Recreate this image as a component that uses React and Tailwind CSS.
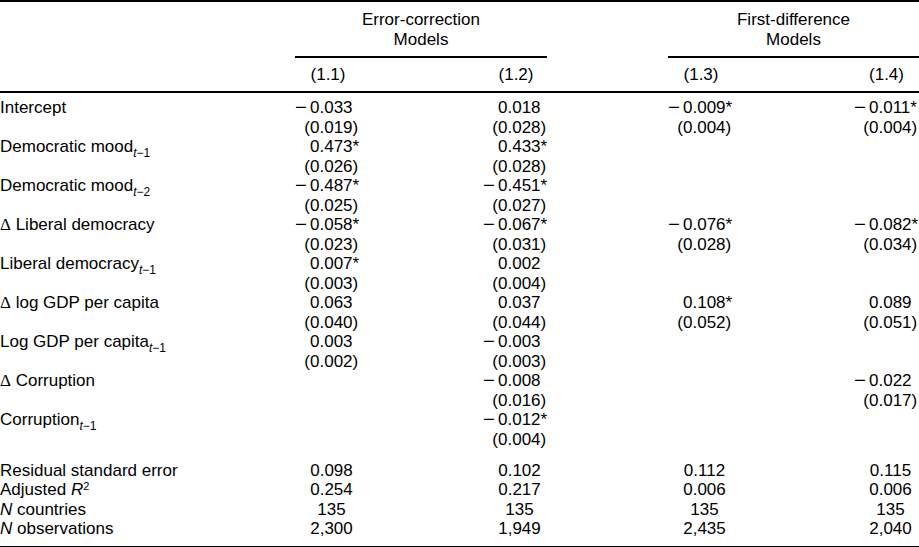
import React from 'react';

const GRID = 'grid grid-cols-[295px_66px_122px_66px_119px_66px_120px_65px]';

const Delta = () => <span className="font-['Liberation_Serif',serif]">Δ</span>;

// Variable rows: label, then [coef, se] per model (null = empty cell)
const ROWS = [
  { label: 'Intercept', cells: [['−0.033', '(0.019)'], ['0.018', '(0.028)'], ['−0.009*', '(0.004)'], ['−0.011*', '(0.004)']] },
  { label: 'Democratic mood', sub: '1', cells: [['0.473*', '(0.026)'], ['0.433*', '(0.028)'], null, null] },
  { label: 'Democratic mood', sub: '2', cells: [['−0.487*', '(0.025)'], ['−0.451*', '(0.027)'], null, null] },
  { label: <><Delta /> Liberal democracy</>, cells: [['−0.058*', '(0.023)'], ['−0.067*', '(0.031)'], ['−0.076*', '(0.028)'], ['−0.082*', '(0.034)']] },
  { label: 'Liberal democracy', sub: '1', cells: [['0.007*', '(0.003)'], ['0.002', '(0.004)'], null, null] },
  { label: <><Delta /> log GDP per capita</>, cells: [['0.063', '(0.040)'], ['0.037', '(0.044)'], ['0.108*', '(0.052)'], ['0.089', '(0.051)']] },
  { label: 'Log GDP per capita', sub: '1', cells: [['0.003', '(0.002)'], ['−0.003', '(0.003)'], null, null] },
  { label: <><Delta /> Corruption</>, cells: [null, ['−0.008', '(0.016)'], null, ['−0.022', '(0.017)']] },
  { label: 'Corruption', sub: '1', cells: [null, ['−0.012*', '(0.004)'], null, null] },
];

const STATS = [
  { label: <>Residual standard error</>, vals: ['0.098', '0.102', '0.112', '0.115'] },
  { label: <>Adjusted <i>R</i><sup className="text-[11px]">2</sup></>, vals: ['0.254', '0.217', '0.006', '0.006'] },
  { label: <><i>N</i> countries</>, vals: ['135', '135', '135', '135'] },
  { label: <><i>N</i> observations</>, vals: ['2,300', '1,949', '2,435', '2,040'] },
];

// column slots in the grid (spacer columns sit between them)
const SLOTS = ['col-start-2', 'col-start-4', 'col-start-6', 'col-start-8'];

const Num = ({ value }) => {
  if (!value) return null;
  const first = value[0];
  if (first === '−') {
    return (
      <span className="whitespace-nowrap">
        <span className="inline-block w-[15px]">
          <span className="inline-block origin-left scale-x-[1.2]">−</span>
        </span>
        {value.slice(1)}
      </span>
    );
  }
  if (first === '(') {
    return (
      <span className="whitespace-nowrap">
        <span className="inline-block w-[15px] text-right">(</span>
        {value.slice(1)}
      </span>
    );
  }
  return (
    <span className="whitespace-nowrap">
      <span className="inline-block w-[15px]" />
      {value}
    </span>
  );
};

const Label = ({ label, sub }) => (
  <span className="whitespace-nowrap">
    {label}
    {sub && (
      <sub className="text-[12px] bottom-[-0.4em]">
        <i>t</i>−{sub}
      </sub>
    )}
  </span>
);

const Line = ({ label, values }) => (
  <div className={`${GRID} h-[19.5px] leading-[19.5px]`}>
    <div className="col-start-1">{label}</div>
    {values.map((v, i) => (
      <div key={i} className={SLOTS[i]}>
        <Num value={v} />
      </div>
    ))}
  </div>
);

export default function App() {
  return (
    <div className="w-[919px] h-[547px] bg-white text-black text-[17px] leading-[19.5px] font-['Liberation_Sans',Arial,sans-serif] overflow-hidden">
      <div className="h-[2px] bg-black" />

      {/* Group headers */}
      <div className={`${GRID} pt-[8px]`}>
        <div className="col-start-2 col-span-3 pr-[2px] text-center">
          <div>Error-correction</div>
          <div>Models</div>
          <div className="mt-[7px] h-[1.5px] bg-black" />
        </div>
        <div className="col-start-6 col-span-3 text-center">
          <div>First-difference</div>
          <div>Models</div>
          <div className="mt-[7px] h-[1.5px] bg-black" />
        </div>
      </div>

      {/* Model numbers */}
      <div className={`${GRID} pt-[7px] pb-[7px]`}>
        {['(1.1)', '(1.2)', '(1.3)', '(1.4)'].map((h, i) => (
          <div key={h} className={`${SLOTS[i]} text-center whitespace-nowrap`}>{h}</div>
        ))}
      </div>
      <div className="h-[2px] bg-black" />

      {/* Coefficients */}
      <div className="pt-[5px]">
        {ROWS.map((r, idx) => (
          <React.Fragment key={idx}>
            <Line label={<Label label={r.label} sub={r.sub} />} values={r.cells.map((c) => (c ? c[0] : null))} />
            <Line label={null} values={r.cells.map((c) => (c ? c[1] : null))} />
          </React.Fragment>
        ))}
      </div>

      {/* Model statistics */}
      <div className="pt-[11.5px] pb-[7px]">
        {STATS.map((s, idx) => (
          <div key={idx} className={`${GRID} h-[19.5px]`}>
            <div className="col-start-1 whitespace-nowrap">{s.label}</div>
            {s.vals.map((v, i) => (
              <div key={i} className={SLOTS[i]}>
                <span className="inline-block w-[15px]" />
                <span className="inline-block w-[43px] text-center">{v}</span>
              </div>
            ))}
          </div>
        ))}
      </div>
      <div className="h-[2px] bg-black" />
    </div>
  );
}
